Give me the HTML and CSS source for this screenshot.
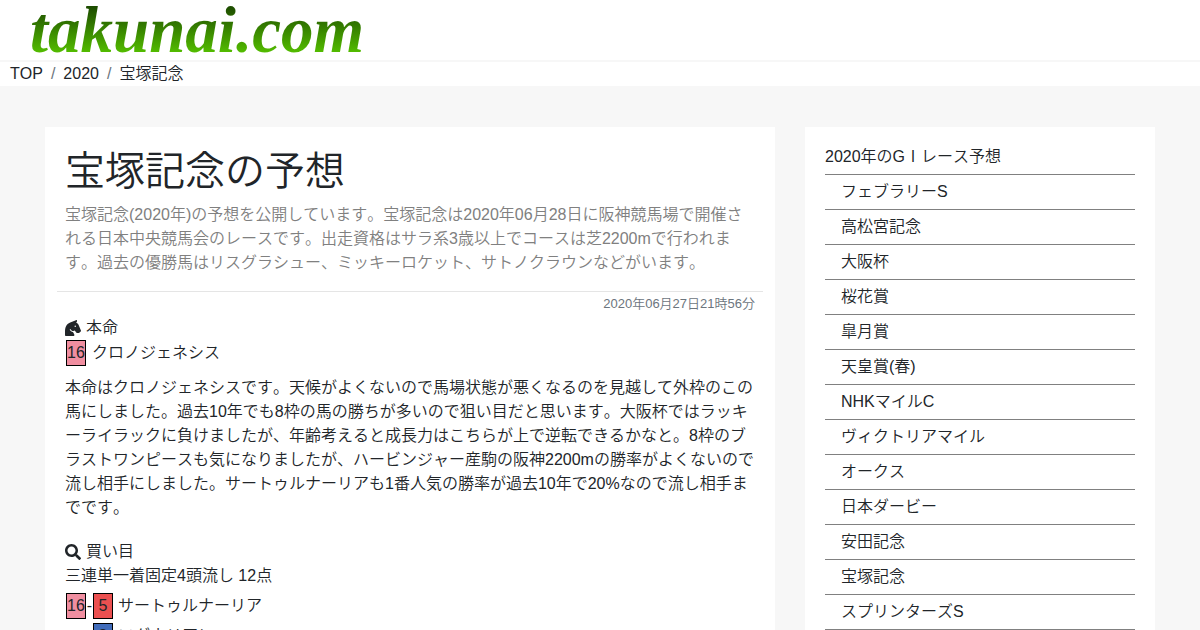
FILE: index.html
```html
<!DOCTYPE html>
<html lang="ja">
<head>
    <meta charset="UTF-8">
    <meta name="viewport" content="width=device-width, initial-scale=1.0">
    <title>宝塚記念の予想 - takunai.com</title>
    <link rel="stylesheet" href="styles.css">
</head>
<body>
    <header class="site-header">
        <a class="logo" href="#">takunai.com</a>
    </header>

    <nav aria-label="breadcrumb">
        <ol class="breadcrumb">
            <li><a href="#">TOP</a></li>
            <li><a href="#">2020</a></li>
            <li><a href="#">宝塚記念</a></li>
        </ol>
    </nav>

    <div class="container">
        <main class="card">
            <h1>宝塚記念の予想</h1>
            <p class="description">宝塚記念(2020年)の予想を公開しています。宝塚記念は2020年06月28日に阪神競馬場で開催される日本中央競馬会のレースです。出走資格はサラ系3歳以上でコースは芝2200mで行われます。過去の優勝馬はリスグラシュー、ミッキーロケット、サトノクラウンなどがいます。</p>
            <div class="date"><time datetime="2020-06-27T21:56">2020年06月27日21時56分</time></div>

            <!-- 本命 -->
            <section class="favorite">
                <h2>
                    <svg class="icon" viewBox="0 0 512 512" aria-hidden="true">
                        <path fill="currentColor" d="M509.800 332.500l-69.900-164.300c-14.900-41.200-50.400-71-93-79.200 18-10.600 46.300-35.900 34.200-82.300-1.300-5-7.100-7.900-12-6.100L166.900 76.300C35.900 123.400 0 238.900 0 398.800V480c0 17.700 14.300 32 32 32h236.200c23.800 0 39.300-25 28.600-46.300L256 384v-.7c-45.600-3.500-84.600-30.700-104.300-69.600-1.600-3.100-.9-6.900 1.600-9.300l12.100-12.100c3.900-3.900 10.600-2.700 12.900 2.400 14.800 33.700 48.200 57.400 87.400 57.400 17.200 0 33-5.100 46.800-13.200l46 63.900c6 8.400 15.700 13.300 26 13.300h50.300c8.500 0 16.600-3.400 22.600-9.400l45.300-39.800c8.900-9.100 11.700-22.600 7.100-34.400zM328 224c-13.300 0-24-10.700-24-24s10.700-24 24-24 24 10.700 24 24-10.700 24-24 24z"/>
                    </svg>
                    本命
                </h2>
                <div class="horse"><span class="num waku8">16</span><span class="name">クロノジェネシス</span></div>
                <p>本命はクロノジェネシスです。天候がよくないので馬場状態が悪くなるのを見越して外枠のこの馬にしました。過去10年でも8枠の馬の勝ちが多いので狙い目だと思います。大阪杯ではラッキーライラックに負けましたが、年齢考えると成長力はこちらが上で逆転できるかなと。8枠のブラストワンピースも気になりましたが、ハービンジャー産駒の阪神2200mの勝率がよくないので流し相手にしました。サートゥルナーリアも1番人気の勝率が過去10年で20%なので流し相手までです。</p>
            </section>

            <!-- 買い目 -->
            <section class="bets">
                <h2>
                    <svg class="icon" viewBox="0 0 512 512" aria-hidden="true">
                        <path fill="currentColor" d="M505 442.700L405.300 343c-4.500-4.500-10.600-7-17-7H372c27.600-35.300 44-79.700 44-128C416 93.100 322.900 0 208 0S0 93.100 0 208s93.100 208 208 208c48.300 0 92.700-16.400 128-44v16.300c0 6.400 2.500 12.500 7 17l99.700 99.700c9.400 9.400 24.600 9.400 33.900 0l28.300-28.300c9.400-9.400 9.400-24.600.1-34zM208 336c-70.700 0-128-57.200-128-128 0-70.700 57.200-128 128-128 70.700 0 128 57.200 128 128 0 70.700-57.200 128-128 128z"/>
                    </svg>
                    買い目
                </h2>
                <div class="bet-type">三連単一着固定4頭流し 12点</div>
                <table class="bet-table">
                    <tr><td><span class="num waku8">16</span></td><td class="dash">-</td><td><span class="num waku3">5</span></td><td class="name">サートゥルナーリア</td></tr>
                    <tr><td></td><td></td><td><span class="num waku4">8</span></td><td class="name">ワグネリアン</td></tr>
                </table>
            </section>
        </main>

        <aside class="card sidebar">
            <div class="side-title">2020年のGⅠレース予想</div>
            <ul class="race-list">
                <li><a href="#">フェブラリーS</a></li>
                <li><a href="#">高松宮記念</a></li>
                <li><a href="#">大阪杯</a></li>
                <li><a href="#">桜花賞</a></li>
                <li><a href="#">皐月賞</a></li>
                <li><a href="#">天皇賞(春)</a></li>
                <li><a href="#">NHKマイルC</a></li>
                <li><a href="#">ヴィクトリアマイル</a></li>
                <li><a href="#">オークス</a></li>
                <li><a href="#">日本ダービー</a></li>
                <li><a href="#">安田記念</a></li>
                <li><a href="#">宝塚記念</a></li>
                <li><a href="#">スプリンターズS</a></li>
            </ul>
        </aside>
    </div>
</body>
</html>
```
FILE: styles.css
```css
* {
    box-sizing: border-box;
}

html {
    scrollbar-width: none;
}

body {
    margin: 0;
    font-family: "Liberation Sans", "Noto Sans CJK JP", sans-serif;
    font-size: 16px;
    font-weight: 350;
    font-kerning: none;
    line-height: 24px;
    color: #212529;
    background-color: #f7f7f7;
}

a {
    color: inherit;
    text-decoration: none;
}

p {
    margin: 0;
}

/* Header */
.site-header {
    display: flex;
    align-items: center;
    height: 62px;
    padding: 0 30px;
    background-color: #fff;
    border-bottom: 2px solid #f7f7f7;
}

.logo {
    padding-right: 6px;
    font-family: "Liberation Serif", serif;
    font-size: 65px;
    font-weight: bold;
    font-style: italic;
    line-height: 60px;
    color: transparent;
    background: linear-gradient(#1c4a00 10%, #55c000 90%);
    -webkit-background-clip: text;
    background-clip: text;
}

.breadcrumb {
    display: flex;
    margin: 0;
    padding: 0 10px;
    list-style: none;
    background-color: #fff;
}

.breadcrumb li + li::before {
    content: "/";
    padding: 0 8px;
    color: #6c757d;
}

/* Layout */
.container {
    display: grid;
    grid-template-columns: 2fr 1fr;
    align-items: start;
    max-width: 1140px;
    margin: 41px auto 0;
}

.card {
    margin: 0 15px;
    padding: 20px;
    background-color: #fff;
}

h1 {
    margin: 0 0 8px;
    font-size: 40px;
    font-weight: 350;
    line-height: 48px;
}

h2 {
    display: flex;
    align-items: center;
    gap: 5px;
    margin: 0;
    font-size: 16px;
    font-weight: 350;
    line-height: 24px;
}

.icon {
    width: 16px;
    height: 16px;
}

.description {
    color: #808080;
}

.date {
    margin: 16px -8px 0;
    padding: 0 8px;
    border-top: 1px solid #e5e5e5;
    font-size: 13px;
    text-align: right;
    color: #6c757d;
}

/* Horse numbers */
.num {
    display: block;
    width: 20px;
    height: 26px;
    border: 1px solid #000;
    text-align: center;
}

.waku3 {
    background-color: #eb5050;
}

.waku4 {
    background-color: #416cba;
}

.waku8 {
    background-color: #f08ea0;
}

.horse {
    display: flex;
    align-items: center;
    gap: 6px;
    margin: 0 1px 10px;
}

.bets {
    margin-top: 20px;
}

.bet-table {
    margin: 3px 1px 0;
    border-collapse: collapse;
}

.bet-table td {
    height: 30px;
    padding: 0;
}

.bet-table .dash {
    width: 7px;
    text-align: center;
}

.bet-table .name {
    padding-left: 5px;
}

/* Sidebar */
.sidebar {
    padding-top: 13px;
}

.side-title,
.race-list li {
    height: 35px;
    padding-top: 5px;
    border-bottom: 1px solid #808080;
}

.race-list {
    margin: 0;
    padding: 0;
    list-style: none;
}

.race-list li {
    padding-left: 16px;
}
```
